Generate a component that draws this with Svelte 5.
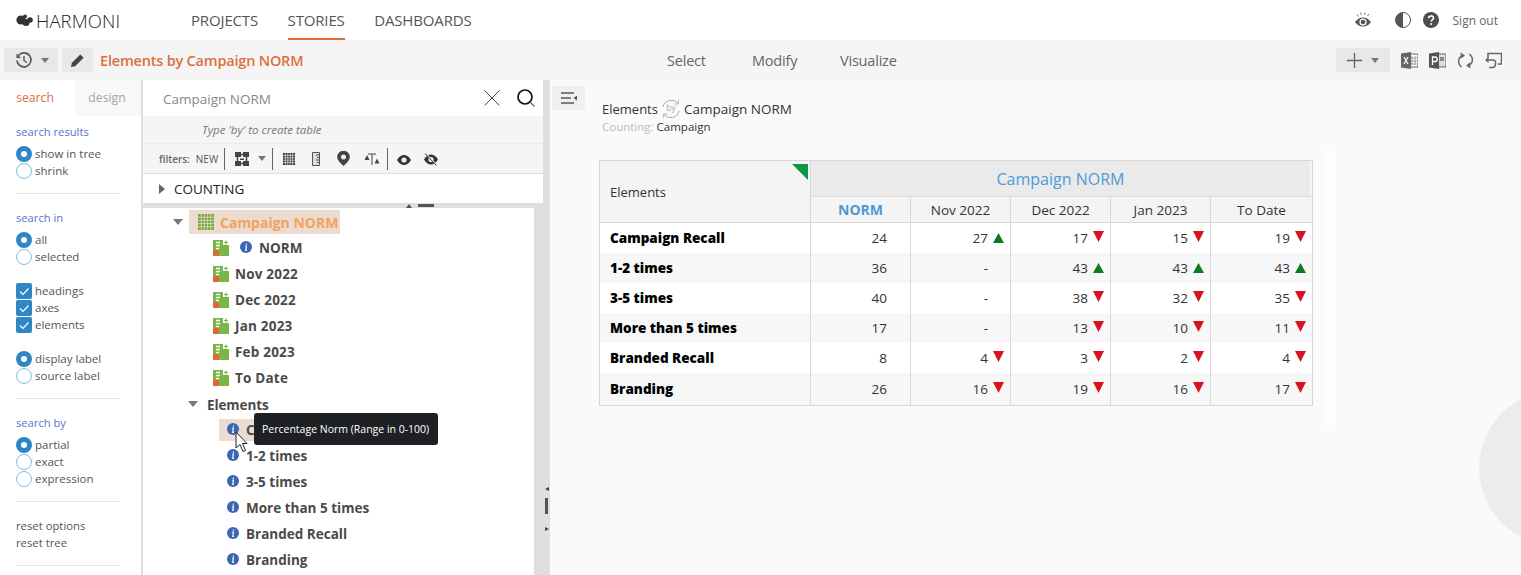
<script>
  const cols = ['Nov 2022', 'Dec 2022', 'Jan 2023', 'To Date'];
  const rows = [
    { name: 'Campaign Recall', norm: 24, cells: [[27, 'u'], [17, 'd'], [15, 'd'], [19, 'd']] },
    { name: '1-2 times', norm: 36, cells: [['-', ''], [43, 'u'], [43, 'u'], [43, 'u']] },
    { name: '3-5 times', norm: 40, cells: [['-', ''], [38, 'd'], [32, 'd'], [35, 'd']] },
    { name: 'More than 5 times', norm: 17, cells: [['-', ''], [13, 'd'], [10, 'd'], [11, 'd']] },
    { name: 'Branded Recall', norm: 8, cells: [[4, 'd'], [3, 'd'], [2, 'd'], [4, 'd']] },
    { name: 'Branding', norm: 26, cells: [[16, 'd'], [19, 'd'], [16, 'd'], [17, 'd']] }
  ];
  const periods = ['Nov 2022', 'Dec 2022', 'Jan 2023', 'Feb 2023', 'To Date'];
  const elements = ['1-2 times', '3-5 times', 'More than 5 times', 'Branded Recall', 'Branding'];
</script>

{#snippet radio(label, on)}
  <div class="opt"><span class="radio" class:on></span>{label}</div>
{/snippet}
{#snippet check(label)}
  <div class="opt"><span class="check"><svg viewBox="0 0 16 16" width="16" height="16"><path d="M4 8.500l3 3 5.500-6" fill="none" stroke="#fff" stroke-width="1.200"/></svg></span>{label}</div>
{/snippet}
{#snippet info()}
  <svg class="info" viewBox="0 0 12 12" width="12" height="12"><circle cx="6" cy="6" r="6" fill="#3c66b1"/><path d="M6.400 2.400v1.300M5.300 5.200h1.100L5.800 9.400h1.100" fill="none" stroke="#fff" stroke-width="1.200"/></svg>
{/snippet}
{#snippet measure()}
  <svg class="measure" viewBox="0 0 16 16" width="16" height="16"><path d="M0 0h10v5h6v11H0z" fill="#7ab648"/><path d="M3 2.500h4M3 5.500h4M3 8.500h3" stroke="#fff" stroke-width="1.400"/><path d="M13 0.500v4M11 2.500h4" stroke="#7ab648" stroke-width="1.200"/><circle cx="3" cy="13" r="3.200" fill="#e2682f"/></svg>
{/snippet}
{#snippet caret()}
  <svg class="caret" viewBox="0 0 8 5" width="8" height="5"><path d="M0 0h8L4 5z" fill="#777"/></svg>
{/snippet}
{#snippet tri(dir)}
  {#if dir === 'u'}
    <svg class="tri up" viewBox="0 0 11 10" width="11" height="10"><path d="M5.500 0L11 10H0z" fill="#0b7d1e"/></svg>
  {:else if dir === 'd'}
    <svg class="tri down" viewBox="0 0 11 11" width="11" height="11"><path d="M0 0h11L5.500 11z" fill="#d8121f"/></svg>
  {:else}
    <span class="tri none"></span>
  {/if}
{/snippet}

<div class="page">
  <header class="nav">
    <div class="logo">
      <svg viewBox="0 0 17 13" width="17" height="13"><circle cx="5" cy="6" r="4.600" fill="#333"/><circle cx="10" cy="8.500" r="3.600" fill="#333"/><circle cx="14" cy="6" r="2.800" fill="#333"/><circle cx="9" cy="2.500" r="2" fill="#333"/></svg>
      <span class="wordmark">HARMONI</span>
    </div>
    <nav class="links">
      <a href="#p">PROJECTS</a>
      <a href="#s" class="active">STORIES</a>
      <a href="#d">DASHBOARDS</a>
    </nav>
    <div class="nav-right">
      <svg class="eye" viewBox="0 0 18 18" width="18" height="18"><path d="M1 11c2.500-3.400 5-4.600 8-4.600s5.500 1.200 8 4.600c-2.500 3.400-5 4.600-8 4.600S3.500 14.400 1 11z" fill="#555"/><circle cx="9" cy="11" r="3.600" fill="#fff"/><circle cx="9" cy="11" r="2.300" fill="#555"/><path d="M3 3.500l1.500 2M6.500 1.500l.8 2.500M11 1.500l-.5 2.500M15 3l-1.500 2" stroke="#777" stroke-width="1"/></svg>
      <svg class="contrast" viewBox="0 0 16 16" width="16" height="16"><circle cx="8" cy="8" r="7.500" fill="#fff" stroke="#555"/><path d="M8 .5a7.500 7.500 0 0 0 0 15z" fill="#555"/></svg>
      <svg class="help" viewBox="0 0 16 16" width="16" height="16"><circle cx="8" cy="8" r="8" fill="#4d4d4d"/><path d="M5.600 6.200c0-3 4.900-3 4.900-.2 0 1.800-2.400 1.800-2.400 3.500" fill="none" stroke="#fff" stroke-width="1.600"/><circle cx="8.100" cy="12" r="1" fill="#fff"/></svg>
      <span class="signout">Sign out</span>
    </div>
  </header>

  <div class="bar">
    <div class="bar-left">
      <button class="tb tb-hist">
        <svg viewBox="0 0 18 18" width="18" height="18"><path d="M3.500 4.500a7 7 0 1 1-1.500 5" fill="none" stroke="#555" stroke-width="1.600"/><path d="M1.500 2.500v4.500H6z" fill="#555"/><path d="M9 5v4.500l3 2" fill="none" stroke="#555" stroke-width="1.400"/></svg>
        {@render caret()}
      </button>
      <button class="tb tb-pen">
        <svg viewBox="0 0 16 16" width="15" height="15"><path d="M1 15l1-4.500L11 1.500l3.500 3.500L5.500 14z" fill="#444"/></svg>
      </button>
      <span class="story-title">Elements by Campaign NORM</span>
    </div>
    <div class="bar-mid">
      <span>Select</span><span>Modify</span><span>Visualize</span>
    </div>
    <div class="bar-right">
      <button class="tb tb-plus">
        <svg viewBox="0 0 18 18" width="17" height="17"><path d="M9 1v16M1 9h16" stroke="#666" stroke-width="1.400"/></svg>
        {@render caret()}
      </button>
      <svg class="ic-x" viewBox="0 0 17 17" width="17" height="17"><path d="M8 2h9v13H8z" fill="#fff" stroke="#666"/><path d="M11 4v9M14 4v9M9 6h7M9 9h7M9 12h7" stroke="#888" stroke-width=".8"/><path d="M0 1.500l10-1.500v17L0 15.500z" fill="#666"/><path d="M3 5l4 7M7 5l-4 7" stroke="#fff" stroke-width="1.200"/></svg>
      <svg class="ic-p" viewBox="0 0 17 17" width="17" height="17"><path d="M8 2h9v13H8z" fill="#ddd" stroke="#666"/><path d="M11 5h4v4h-4z" fill="#888"/><path d="M0 1.500l10-1.500v17L0 15.500z" fill="#555"/><path d="M3.500 13V5h2.500a2 2 0 0 1 0 4.500H3.500" fill="none" stroke="#fff" stroke-width="1.300"/></svg>
      <svg class="ic-r" viewBox="0 0 17 17" width="17" height="17"><path d="M6 3.500C1 5 0 11 4.500 15M11 13.500c5-1.500 6-7.500 1.500-11.500" fill="none" stroke="#666" stroke-width="1.500"/><path d="M3.500 0.500L8 3.500 4 6.500zM13.500 16.500L9 13.500 13 10.500z" fill="#666"/></svg>
      <svg class="ic-u" viewBox="0 0 17 17" width="17" height="17"><path d="M3 6V1.500h13.500v10.500H13" fill="none" stroke="#666" stroke-width="1.500"/><path d="M1 8h7.500c3 0 3 7.500-1 7.500H4" fill="none" stroke="#666" stroke-width="1.500"/><path d="M0 8l3.500-3v6z" fill="#666"/></svg>
    </div>
  </div>

  <div class="main">
    <aside class="side">
      <div class="tabs"><span class="tab on">search</span><span class="tab">design</span></div>
      <section>
        <h4>search results</h4>
        {@render radio('show in tree', true)}
        {@render radio('shrink', false)}
      </section>
      <section>
        <h4>search in</h4>
        {@render radio('all', true)}
        {@render radio('selected', false)}
        <div class="spacer"></div>
        {@render check('headings')}
        {@render check('axes')}
        {@render check('elements')}
        <div class="spacer"></div>
        {@render radio('display label', true)}
        {@render radio('source label', false)}
      </section>
      <section>
        <h4>search by</h4>
        {@render radio('partial', true)}
        {@render radio('exact', false)}
        {@render radio('expression', false)}
      </section>
      <section class="last">
        <div class="reset">reset options</div>
        <div class="reset">reset tree</div>
      </section>
    </aside>

    <div class="panel">
      <div class="search">
        <span class="q">Campaign NORM</span>
        <svg class="x" viewBox="0 0 16 16" width="16" height="16"><path d="M.5.500l15 15M15.500.500l-15 15" stroke="#444" stroke-width="1"/></svg>
        <svg class="mag" viewBox="0 0 18 18" width="18" height="18"><circle cx="8" cy="8" r="7" fill="none" stroke="#111" stroke-width="1.700"/><path d="M13 13l4.500 4.500" stroke="#666" stroke-width="1.200"/></svg>
      </div>
      <div class="hint">Type 'by' to create table</div>
      <div class="filters">
        <b>filters:</b><span class="new">NEW</span><i class="sep"></i>
        <svg class="f-rel" viewBox="0 0 14 14" width="14" height="14"><path d="M0 0h6v5H0zM8 0h6v5H8zM0 9h6v5H0zM8 9h6v5H8z" fill="#444"/><path d="M5 2.500h4M5 11.500h4M2.500 4.500v5M11.500 4.500v5" stroke="#444" stroke-width="1.500"/><path d="M5 6.500h4v1.500H5z" fill="#444"/></svg>
        <span class="f-car">{@render caret()}</span><i class="sep"></i>
        <svg class="f-grid" viewBox="0 0 12 12" width="12" height="12"><path d="M0 0h12v12H0z" fill="#333"/><path d="M2.400 0v12M4.800 0v12M7.200 0v12M9.600 0v12M0 2.400h12M0 4.800h12M0 7.200h12M0 9.600h12" stroke="#eee" stroke-width=".7"/></svg>
        <svg class="f-rule" viewBox="0 0 8 14" width="8" height="14"><path d="M.5.500h7v13h-7z" fill="#ddd" stroke="#555"/><path d="M4 3h4M5 5.500h3M4 8h4M5 10.500h3" stroke="#555"/></svg>
        <svg class="f-pin" viewBox="0 0 13 15" width="13" height="15"><path d="M6.500 15L2 10.500A6.300 6.300 0 1 1 11 10.500z" fill="#444"/><circle cx="6.500" cy="6" r="2.500" fill="#eee"/></svg>
        <svg class="f-axis" viewBox="0 0 16 12" width="16" height="12"><path d="M4 1h8M8 1v11" stroke="#444" stroke-width="1"/><path d="M3 2L5.500 7H.5zM13 5.500l-2.500 5h5z" fill="#444"/></svg>
        <i class="sep s2"></i>
        <svg class="f-eye" viewBox="0 0 14 10" width="14" height="10"><path d="M0 5c2-3.500 4.500-5 7-5s5 1.500 7 5c-2 3.500-4.500 5-7 5S2 8.500 0 5z" fill="#333"/><circle cx="7" cy="5" r="2.600" fill="#eee"/></svg>
        <svg class="f-off" viewBox="0 0 14 13" width="14" height="13"><path d="M0 6.500c2-3.500 4.500-5 7-5s5 1.500 7 5c-2 3.500-4.500 5-7 5s-5-1.500-7-5z" fill="#333"/><circle cx="7" cy="6.500" r="2.600" fill="#eee"/><path d="M1.500 .5l11.500 12" stroke="#eee" stroke-width="1.500"/><path d="M1 0.500l11.500 12" stroke="#333" stroke-width="1"/></svg>
      </div>
      <div class="counting">
        <svg viewBox="0 0 6 10" width="6" height="10"><path d="M0 0l6 5-6 5z" fill="#666"/></svg>
        <span>COUNTING</span>
      </div>
      <div class="tree-area">
        <div class="tree-gutter"><svg viewBox="0 0 6 4" width="6" height="4"><path d="M3 0l3 4H0z" fill="#555"/></svg><i></i></div>
        <div class="tree">
          <div class="row r-root">
            <svg class="t-arrow" viewBox="0 0 10 6" width="10" height="6"><path d="M0 0h10L5 6z" fill="#777"/></svg>
            <span class="hl">
              <svg viewBox="0 0 16 16" width="16" height="16"><path d="M0 0h16v16H0z" fill="#79a83f"/><path d="M3.200 0v16M6.400 0v16M9.600 0v16M12.800 0v16M0 3.200h16M0 6.400h16M0 9.600h16M0 12.800h16" stroke="#e6dccd" stroke-width=".8"/></svg>
              <span class="root-label">Campaign NORM</span>
            </span>
          </div>
          <div class="row r-per">{@render measure()}<span class="norm-info">{@render info()}</span><span class="lbl">NORM</span></div>
          {#each periods as p}
            <div class="row r-per">{@render measure()}<span class="lbl gap">{p}</span></div>
          {/each}
          <div class="row r-el">
            <svg class="t-arrow" viewBox="0 0 10 6" width="10" height="6"><path d="M0 0h10L5 6z" fill="#777"/></svg>
            <span class="lbl">Elements</span>
          </div>
          <div class="row r-item"><span class="hl2">{@render info()}<span class="lbl">Campaign Recall</span></span></div>
          {#each elements as e}
            <div class="row r-item"><span class="plain">{@render info()}<span class="lbl">{e}</span></span></div>
          {/each}
        </div>
        <div class="tip">Percentage Norm (Range in 0-100)</div>
        <svg class="cursor" viewBox="0 0 13 22" width="13" height="22"><path d="M1 1v16l4-3.500 3 7 2.500-1-3-7H12z" fill="#fff" stroke="#222" stroke-width="1"/></svg>
      </div>
    </div>

    <div class="splitter">
      <span class="sp-l"></span><i></i><span class="sp-r"></span>
    </div>

    <div class="content">
      <button class="collapse">
        <svg viewBox="0 0 16 12" width="16" height="12"><path d="M0 1h13M0 6h10M0 11h13" stroke="#555" stroke-width="1.600"/><path d="M16 3.500v5L12.500 6z" fill="#555"/></svg>
      </button>
      <div class="report">
        <div class="heading">
          <div class="h1">
            <span class="h1a">Elements</span>
            <svg class="by" viewBox="0 0 20 20" width="20" height="20"><path d="M2 8a8.500 8.500 0 0 1 15-3.500M18 12a8.500 8.500 0 0 1-15 3.500" fill="none" stroke="#aaa"/><path d="M17.500 1v4h-4M2.500 19v-4h4" fill="none" stroke="#aaa" stroke-width=".8"/><text x="10" y="12" text-anchor="middle">by</text></svg>
            <span>Campaign NORM</span>
          </div>
          <div class="h2"><span class="muted">Counting:</span> Campaign</div>
        </div>
        <table>
          <colgroup>
            <col class="c-name" /><col class="c-n" /><col class="c-n" /><col class="c-n" /><col class="c-n" /><col class="c-e" />
          </colgroup>
          <thead>
            <tr class="h-top">
              <th rowspan="2" class="th-el">Elements<span class="flag"></span></th>
              <th colspan="5" class="th-group"><span>Campaign NORM</span></th>
            </tr>
            <tr class="h-sub">
              <th class="th-norm">NORM</th>
              {#each cols as c}<th>{c}</th>{/each}
            </tr>
          </thead>
          <tbody>
            {#each rows as r}
              <tr>
                <td class="name">{r.name}</td>
                <td class="norm">{r.norm}</td>
                {#each r.cells as [v, d]}
                  <td class="val"><span class="v">{v}</span>{@render tri(d)}</td>
                {/each}
              </tr>
            {/each}
          </tbody>
        </table>
      </div>
      <div class="strip"></div>
      <div class="blob"></div>
    </div>
  </div>
</div>

<style>
  :global(body) { margin: 0; background: #fff; }
  .page { width: 1521px; height: 575px; overflow: hidden; font-family: "Open Sans", "Noto Sans", sans-serif; color: #333; display: flex; flex-direction: column; }
  button { border: 0; padding: 0; font: inherit; display: flex; align-items: center; }
  .nav { height: 40px; flex: none; display: flex; align-items: center; background: #fff; }
  .logo { width: 191px; flex: none; padding-left: 16px; box-sizing: border-box; display: flex; align-items: center; gap: 3px; }
  .wordmark { font-size: 18.500px; letter-spacing: .1px; color: #222; font-weight: 300; }
  .links { display: flex; gap: 29.500px; height: 40px; }
  .links a { color: #555; text-decoration: none; font-size: 15px; font-weight: 500; line-height: 40px; box-sizing: border-box; letter-spacing: -.15px; }
  .links a.active { border-bottom: 2px solid #d9703a; }
  .nav-right { margin-left: auto; display: flex; align-items: center; padding-right: 23px; }
  .eye { margin-right: 23px; }
  .help { margin-left: 12px; }
  .signout { margin-left: 14px; font-size: 12px; color: #666; }

  .bar { height: 40px; flex: none; background: #f5f5f5; display: flex; align-items: center; }
  .bar-left { display: flex; align-items: center; width: 667px; flex: none; padding-left: 4px; box-sizing: border-box; }
  .tb { height: 24px; background: #e8e8e8; }
  .tb-hist { width: 54px; padding-left: 11px; gap: 8px; box-sizing: border-box; }
  .tb-pen { width: 31px; margin-left: 4px; justify-content: center; }
  .story-title { margin-left: 7px; color: #dc703a; font-size: 14.500px; font-weight: 600; letter-spacing: -.2px; }
  .bar-mid { display: flex; font-size: 14.500px; font-weight: 500; color: #666; letter-spacing: -.2px; }
  .bar-mid span { width: 85px; }
  .bar-mid span:nth-child(2) { width: 88px; }
  .bar-right { margin-left: auto; display: flex; align-items: center; padding-right: 19px; gap: 11px; }
  .tb-plus { width: 54px; padding-left: 10px; gap: 8px; box-sizing: border-box; margin-right: 0; }

  .main { flex: 1; min-height: 0; display: flex; }
  .side { width: 143px; flex: none; box-sizing: border-box; background: #fff; border-right: 2px solid #dedede; font-size: 12px; }
  .tabs { height: 36px; display: flex; }
  .tab { width: 66px; padding-top: 9px; box-sizing: border-box; text-align: center; font-size: 12.200px; color: #a5a5a5; background: #f8f8f8; padding-right: 2px; }
  .tab.on { width: 75px; background: #fff; color: #d9703a; padding-right: 5px; }
  section { margin-left: 16px; width: 104px; padding-top: 8px; padding-bottom: 14px; border-bottom: 1px solid #e8e8e8; margin-bottom: 8px; }
  h4 { margin: 0 0 5px; font-size: 11.200px; line-height: 16px; font-weight: 400; color: #5a72cf; }
  .opt { height: 17px; display: flex; align-items: center; color: #555; white-space: nowrap; font-size: 11.500px; }
  .radio { width: 16px; height: 16px; margin-right: 3px; border-radius: 50%; box-sizing: border-box; border: 1px solid #79c0df; background: #fff; flex: none; }
  .radio.on { border: 5px solid #2f86c5; }
  .check { width: 16px; height: 16px; margin-right: 3px; border-radius: 2px; background: #2f86c5; flex: none; }
  .spacer { height: 17px; }
  .reset { height: 17px; line-height: 17px; color: #555; font-size: 11.300px; }
  section.last { padding-top: 7px; }

  .panel { width: 400px; flex: none; display: flex; flex-direction: column; min-height: 0; background: #dedede; }
  .search { height: 36px; flex: none; background: #fff; display: flex; align-items: center; padding: 0 8px 0 20px; }
  .q { flex: 1; font-size: 13.500px; color: #888; position: relative; top: 1px; }
  .mag { margin-left: 17px; }
  .hint { height: 27px; flex: none; background: #f5f5f5; line-height: 27px; padding-left: 59px; font-size: 11.500px; font-style: italic; color: #777; }
  .filters { flex: none; background: #f5f5f5; border-top: 1px solid #ececec; border-bottom: 1px solid #ddd; display: flex; align-items: center; padding-left: 16px; height: 29px; }
  .filters b { font-size: 10px; font-weight: 600; color: #666; }
  .new { font-size: 10px; color: #555; margin-left: 6px; }
  .sep { width: 1px; height: 22px; background: #666; flex: none; margin-left: 6px; }
  .f-rel { margin-left: 10px; }
  .f-car { margin-left: 9px; display: flex; }
  .f-car + .sep { margin-left: 6px; }
  .f-grid { margin-left: 10px; }
  .f-rule { margin-left: 17px; }
  .f-pin { margin-left: 17px; }
  .f-axis { margin-left: 14px; }
  .sep.s2 { margin-left: 7px; }
  .f-eye { margin-left: 9px; position: relative; top: 1px; }
  .f-off { margin-left: 13px; position: relative; top: 1px; }
  .counting { height: 29px; flex: none; background: #fff; display: flex; align-items: center; padding-left: 16px; gap: 9px; font-size: 13.500px; color: #222; }
  .tree-area { flex: 1; min-height: 0; position: relative; padding-top: 5px; display: flex; flex-direction: column; }
  .tree-gutter { position: absolute; left: 263px; top: 0; height: 5px; display: flex; align-items: center; gap: 6px; }
  .tree-gutter svg { display: block; }
  .tree-gutter i { display: block; width: 16px; height: 3px; background: #555; }
  .tree { width: 391px; flex: 1; background: #fff; padding-top: 1px; overflow: hidden; font-weight: 700; color: #4a4a4a; font-size: 13.500px; }
  .row { height: 26px; display: flex; align-items: center; white-space: nowrap; }
  .r-root { padding-left: 30px; }
  .r-root .hl { margin-left: 6px; height: 24px; width: 151px; background: #ebdccf; display: flex; align-items: center; padding-left: 9px; box-sizing: border-box; gap: 6px; }
  .root-label { color: #f1a35f; font-size: 14px; }
  .r-per { padding-left: 70px; }
  .measure { flex: none; overflow: visible; }
  .norm-info { margin-left: 11px; display: flex; }
  .r-per .lbl { margin-left: 7px; }
  .r-per .lbl.gap { margin-left: 6px; letter-spacing: .2px; }
  .r-el { padding-left: 45px; }
  .r-el .lbl { margin-left: 9px; padding-top: 1px; letter-spacing: -.1px; }
  .r-item { padding-left: 76px; }
  .hl2 { height: 22px; width: 120px; background: #ebdccf; display: flex; align-items: center; padding-left: 8px; box-sizing: border-box; gap: 7px; }
  .plain { display: flex; align-items: center; padding-left: 8px; gap: 7px; }
  .info { flex: none; position: relative; top: -1px; }
  .tip { position: absolute; left: 111px; top: 210px; height: 32px; line-height: 32px; padding: 0 9px 0 8px; background: #1e2024; color: #fff; border-radius: 3px; font-size: 10.500px; white-space: nowrap; font-weight: 400; }
  .cursor { position: absolute; left: 92px; top: 228px; }

  .splitter { width: 7px; flex: none; background: #dedede; display: flex; flex-direction: column; align-items: center; padding-top: 407px; box-sizing: border-box; }
  .splitter i { display: block; width: 3px; height: 16px; background: #555; margin: 7px 0 13px; }
  .sp-l { width: 0; height: 0; border: 2.500px solid transparent; border-right: 4px solid #444; border-left: 0; }
  .sp-r { width: 0; height: 0; border: 2.500px solid transparent; border-left: 4px solid #444; border-right: 0; }

  .content { flex: 1; min-width: 0; background: #fafafa; position: relative; overflow: hidden; display: flex; align-items: flex-start; }
  .collapse { width: 33px; height: 24px; margin: 6px 0 0 2px; background: #f0f0f0; justify-content: center; flex: none; }
  .report { margin-left: 14px; padding-top: 20px; flex: none; }
  .heading { padding-left: 3px; height: 60px; font-size: 13.500px; color: #333; }
  .h1 { display: flex; align-items: center; gap: 3px; height: 18px; }
  .h1a { font-size: 13px; }
  .by { display: block; }
  .by text { font-size: 8.500px; fill: #aaa; font-family: "Open Sans", sans-serif; }
  .h2 { font-size: 11.500px; margin-top: 1px; line-height: 16px; }
  .muted { color: #bbb; }
  table { border-collapse: separate; border-spacing: 0; width: 714px; table-layout: fixed; border: 1px solid #d8d8d8; font-size: 13.500px; background: #fff; }
  .c-name { width: 211px; }
  .c-n { width: 100px; }
  .c-e { width: 101px; }
  th { font-weight: 400; padding: 0; background: #f4f4f4; color: #333; position: relative; }
  .th-el { text-align: left; padding-left: 10px; box-sizing: border-box; border-right: 1px solid #d8d8d8; border-bottom: 1px solid #d8d8d8; font-size: 13px; }
  .flag { position: absolute; top: 3px; right: 2px; width: 0; height: 0; border-top: 16px solid #0e9648; border-left: 16px solid transparent; }
  .th-group { background: #eaeaea; height: 35px; color: #4f9ad6; font-size: 16px; font-weight: 500; border-bottom: 1px solid #ddd; border-right: 2px solid #f4f4f4; }
  .h-sub th { height: 26px; box-sizing: border-box; border-right: 1px solid #d8d8d8; border-bottom: 1px solid #d8d8d8; font-size: 13.500px; }
  .h-sub th:last-child { border-right: 0; }
  .h-sub .th-norm { color: #4f9ad6; font-weight: 700; font-size: 14px; }
  td { height: 30px; padding: 0; box-sizing: border-box; border-right: 1px solid #d8d8d8; text-align: right; color: #333; }
  tbody tr:last-child td { height: 32px; }
  td:last-child { border-right: 0; }
  tbody tr:nth-child(even) td { background: #f7f7f7; }
  td.name { text-align: left; padding-left: 10px; font-weight: 800; color: #000; font-size: 13.500px; }
  td.norm { padding-right: 23px; }
  td.val { padding-right: 6px; white-space: nowrap; }
  .v { display: inline-block; }
  .tri { display: inline-block; margin-left: 5px; width: 11px; vertical-align: baseline; }
  .tri.down { position: relative; top: -1px; }
  .tri.none { height: 1px; }
  .strip { position: absolute; left: 775px; top: 70px; width: 10px; height: 275px; background: #fdfdfd; }
  .blob { position: absolute; left: 929px; top: 310px; width: 156px; height: 156px; border-radius: 50%; background: #ececec; }
</style>
